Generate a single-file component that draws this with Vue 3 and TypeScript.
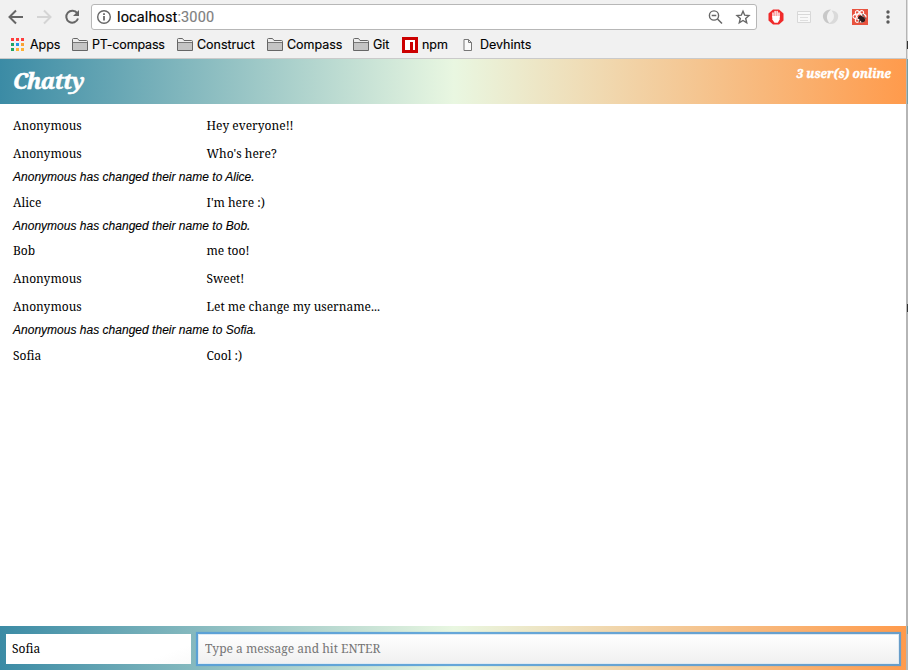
<script setup lang="ts">
interface Entry { kind: 'message' | 'system'; user?: string; text: string }
const folders: { name: string; w: string }[] = [
  { name: 'PT-compass', w: 'f1' },
  { name: 'Construct', w: 'f2' },
  { name: 'Compass', w: 'f3' },
  { name: 'Git', w: 'f4' },
]
const appColors: string[] = ['#ff3c3c', '#ff3c3c', '#ff3c3c', '#1fa463', '#2196e8', '#f9a234', '#1fa463', '#ffb234', '#ffb234']
const entries: Entry[] = [
  { kind: 'message', user: 'Anonymous', text: 'Hey everyone!!' },
  { kind: 'message', user: 'Anonymous', text: "Who's here?" },
  { kind: 'system', text: 'Anonymous has changed their name to Alice.' },
  { kind: 'message', user: 'Alice', text: "I'm here :)" },
  { kind: 'system', text: 'Anonymous has changed their name to Bob.' },
  { kind: 'message', user: 'Bob', text: 'me too!' },
  { kind: 'message', user: 'Anonymous', text: 'Sweet!' },
  { kind: 'message', user: 'Anonymous', text: 'Let me change my username...' },
  { kind: 'system', text: 'Anonymous has changed their name to Sofia.' },
  { kind: 'message', user: 'Sofia', text: 'Cool :)' },
]
const username = 'Sofia'
</script>

<template>
  <div class="window">
    <div class="browser">
      <div class="toolbar">
        <svg class="nav" viewBox="0 0 86 34">
          <path d="M23 17H10M16 10.5L9.5 17L16 23.5" fill="none" stroke="#666" stroke-width="2" />
          <path d="M37 17H50M44 10.5L50.500 17L44 23.500" fill="none" stroke="#d4d4d4" stroke-width="2" />
          <path d="M77.200 13.200A6 6 0 1 0 78 18.500" fill="none" stroke="#666" stroke-width="2" />
          <path d="M79 10V16H73Z" fill="#666" />
        </svg>
        <div class="address">
          <svg class="info" viewBox="0 0 16 16">
            <circle cx="8" cy="8" r="6.300" fill="none" stroke="#666" stroke-width="1.400" />
            <path d="M7.200 7h1.600v4.500H7.200zM7.200 4.200h1.600v1.700H7.200z" fill="#555" />
          </svg>
          <span class="url">localhost<span class="port">:3000</span></span>
          <svg class="tools" viewBox="0 0 44 18">
            <circle cx="7" cy="7.500" r="4.600" fill="none" stroke="#666" stroke-width="1.400" />
            <path d="M4.700 7.500H9.300M10.500 11L15 15.500" fill="none" stroke="#666" stroke-width="1.500" />
            <path d="M36 3.200L37.700 7.200L42 7.600L38.700 10.500L39.700 14.800L36 12.500L32.300 14.800L33.300 10.500L30 7.600L34.300 7.200Z" fill="none" stroke="#666" stroke-width="1.400" />
          </svg>
        </div>
        <svg class="extensions" viewBox="0 0 140 34">
          <path d="M8 9.500H14L18.500 13.500V20.500L14 24.500H8L3.500 20.500V13.500Z" fill="#f02a2a" />
          <path d="M8 17V13M10.100 17V11.500M12.100 17V11.500M14 17V13" stroke="#fff" stroke-width="1.400" stroke-linecap="round" />
          <path d="M7.300 16H14.700V19.500L12.800 22.800H9.500L7.300 19.500Z" fill="#fff" />
          <path d="M32.500 11.500h13v11h-13zM33 14.500h12" fill="#f8f8f8" stroke="#d8d8d8" />
          <path d="M35 17.500h8M35 20.500h8" stroke="#dedede" />
          <path d="M66 9.500C60 9.500 56.500 14 58.500 19C59.700 22 62.500 23.500 65 23.800C61 20 60.500 14 66 9.500Z" fill="#c8c8c8" />
          <path d="M66.500 10.500C72.500 10.500 75 16 72 20.500C70 23.600 66.500 25 63.500 23.500C69 21.500 71 15.500 66.500 10.500Z" fill="#dadada" />
          <rect x="87" y="9" width="16" height="16" fill="#e8533f" />
          <g fill="none" stroke="#fff" stroke-width="1.100">
            <ellipse cx="94.500" cy="16.500" rx="6.500" ry="2.600" />
            <ellipse cx="94.500" cy="16.500" rx="6.500" ry="2.600" transform="rotate(60 94.500 16.500)" />
            <ellipse cx="94.500" cy="16.500" rx="6.500" ry="2.600" transform="rotate(120 94.500 16.500)" />
          </g>
          <ellipse cx="96.800" cy="18.800" rx="3.800" ry="2.400" transform="rotate(45 96.800 18.800)" fill="#2c1d1d" />
          <path d="M94 17L93 19M97 15L99 15M95 20L94 22M99 18H101M97 21V23" stroke="#2c1d1d" />
          <g fill="#5a5a5a"><circle cx="123" cy="12" r="1.700" /><circle cx="123" cy="17" r="1.700" /><circle cx="123" cy="22" r="1.700" /></g>
        </svg>
      </div>
      <div class="bookmarks">
        <div class="bookmark apps">
          <svg class="apps-icon" viewBox="0 0 13 13">
            <rect v-for="(color, i) in appColors" :key="i" :x="(i % 3) * 5" :y="Math.floor(i / 3) * 5" width="3" height="3" :fill="color" />
          </svg>
          <span>Apps</span>
        </div>
        <div v-for="folder in folders" :key="folder.name" class="bookmark" :class="folder.w">
          <svg class="folder" viewBox="0 0 16 14">
            <path d="M.500 12.500V1.500Q.500.500 1.500.500H5.500L7 2.500H14.500Q15.500 2.500 15.500 3.500V12.500Z" fill="#ededed" stroke="#666" />
            <path d="M1 5H15V12H1Z" fill="#c4c4c4" /><path d="M1 4.500H15" stroke="#777" />
          </svg>
          <span>{{ folder.name }}</span>
        </div>
        <div class="bookmark npm">
          <svg class="npm-icon" viewBox="0 0 16 16"><path d="M0 0H16V16H0Z" fill="#c00" /><path d="M3 3H13V13H11V5H8V13H3Z" fill="#fff" /></svg>
          <span>npm</span>
        </div>
        <div class="bookmark">
          <svg class="page" viewBox="0 0 10 12"><path d="M1 .500H5.500L8.500 3.500V11.500H1ZM5.500.500V3.500H8.500" fill="#fafafa" stroke="#777" /></svg>
          <span>Devhints</span>
        </div>
      </div>
    </div>
    <header class="header">
      <h1 class="brand">Chatty</h1>
      <span class="online">3 user(s) online</span>
    </header>
    <main class="messages">
      <div v-for="(entry, i) in entries" :key="i" :class="entry.kind">
        <span v-if="entry.user" class="user">{{ entry.user }}</span>
        <span class="text">{{ entry.text }}</span>
      </div>
    </main>
    <footer class="chatbar">
      <input class="name" :value="username">
      <input class="compose" placeholder="Type a message and hit ENTER">
    </footer>
    <div class="edge"><i class="edge-top"></i><i class="edge-mark first"></i><i class="edge-band"></i><i class="edge-mark second"></i><i class="edge-band low"></i></div>
  </div>
</template>

<style>
body { margin: 0; overflow: hidden; background: #fff; }
</style>
<style scoped>
* { box-sizing: border-box; }
.window { position: relative; display: flex; flex-direction: column; width: 908px; height: 670px; overflow: hidden; background: #fff; }
.browser { height: 59px; background: #f1f1f1; border-bottom: 1px solid #cacaca; font-family: Inter, sans-serif; color: #000; }
.toolbar { display: flex; height: 34px; }
.nav { width: 86px; height: 34px; margin-right: 5px; }
.address { display: flex; align-items: center; width: 666px; height: 26px; margin-top: 4px; background: #fff; border: 1px solid #b7b7b7; border-radius: 3px; }
.info { width: 16px; height: 16px; margin-left: 4px; }
.url { margin-left: 5px; font-family: Roboto, sans-serif; font-size: 14.500px; letter-spacing: .130px; -webkit-text-stroke: .150px; }
.port { color: #808080; }
.tools { width: 44px; height: 18px; margin-left: auto; margin-right: 5px; }
.extensions { width: 140px; height: 34px; margin-left: 8px; }
.bookmarks { display: flex; align-items: center; height: 22px; padding-left: 11px; font-size: 12.500px; letter-spacing: -.030px; }
.bookmark { display: flex; align-items: center; height: 22px; white-space: nowrap; }
.bookmark span { width: 0; height: 17px; line-height: 15px; -webkit-text-stroke: .150px; }
.f1 span { letter-spacing: -.170px; }
.apps { width: 61px; }
.apps-icon { width: 13px; height: 13px; margin: 0 6px 1px 0; }
.folder { width: 16px; height: 14px; margin-right: 4px; }
.f1 { width: 105px; } .f2 { width: 90px; } .f3 { width: 86px; } .f4 { width: 49px; }
.npm { width: 61px; }
.npm-icon { width: 16px; height: 16px; margin-right: 4px; }
.page { width: 10px; height: 12px; margin-right: 7px; }
.header { display: flex; justify-content: space-between; height: 45px; padding: 0 17px 0 13px; background: linear-gradient(90deg, #3b8ba5, #e9f7e1 50%, #ff9a4b); color: #fff; font-family: "Noto Serif", "Droid Serif", "DejaVu Serif Condensed", "DejaVu Serif", serif; font-style: italic; font-weight: 700; }
.brand { margin: 0; font-size: 22px; line-height: 43px; letter-spacing: -.650px; -webkit-text-stroke: .600px #fff; }
.online { font-size: 12px; line-height: 29px; -webkit-text-stroke: .400px #fff; }
.messages { flex: 1; padding-top: 8px; color: #000; }
.message, .chatbar input { font-family: "Noto Serif", "Droid Serif", "DejaVu Serif Condensed", "DejaVu Serif", serif; font-size: 12px; }
.message { display: flex; height: 28px; padding-left: 13px; line-height: 28px; }
.user { width: 193.500px; }
.system { height: 20.700px; padding-left: 13px; font: italic 12px/18px "Liberation Sans", Arial, sans-serif; letter-spacing: .015px; -webkit-text-stroke: .120px; }
.chatbar { display: flex; height: 44px; padding: 6px 9px 4px 6px; background: linear-gradient(90deg, #3b8ba5, #e9f7e1 50%, #ff9a4b); }
.chatbar input { min-width: 0; outline: none; border: 0; border-radius: 0; color: #000; }
.name { width: 185px; height: 30px; margin-top: 2px; padding: 0 6px 2px; background: linear-gradient(160deg, #fff 80%, #fafafa); }
.compose { flex: 1; height: 30px; margin: 2px 0 0 7px; padding: 0 7px 2px; background: linear-gradient(#fff, #f0f0f0); box-shadow: inset 0 0 0 1px #dfeaf3, 0 0 0 2px rgb(86 158 216 / 78%), 0 0 1px 2px rgb(86 158 216 / 50%); }
.compose::placeholder { color: #757575; opacity: 1; }
.edge { position: absolute; right: 0; top: 0; width: 2px; height: 670px; background: #b5b5b5; }
.edge i { position: absolute; right: 0; width: 1px; }
.edge-top { top: 0; height: 59px; background: #dcdcdc; }
.edge-mark { height: 8px; background: #333; }
.first { top: 41px; } .second { top: 304px; }
.edge-band { top: 59px; height: 45px; background: #759d9f; }
.low { top: 626px; height: 8px; }
</style>
